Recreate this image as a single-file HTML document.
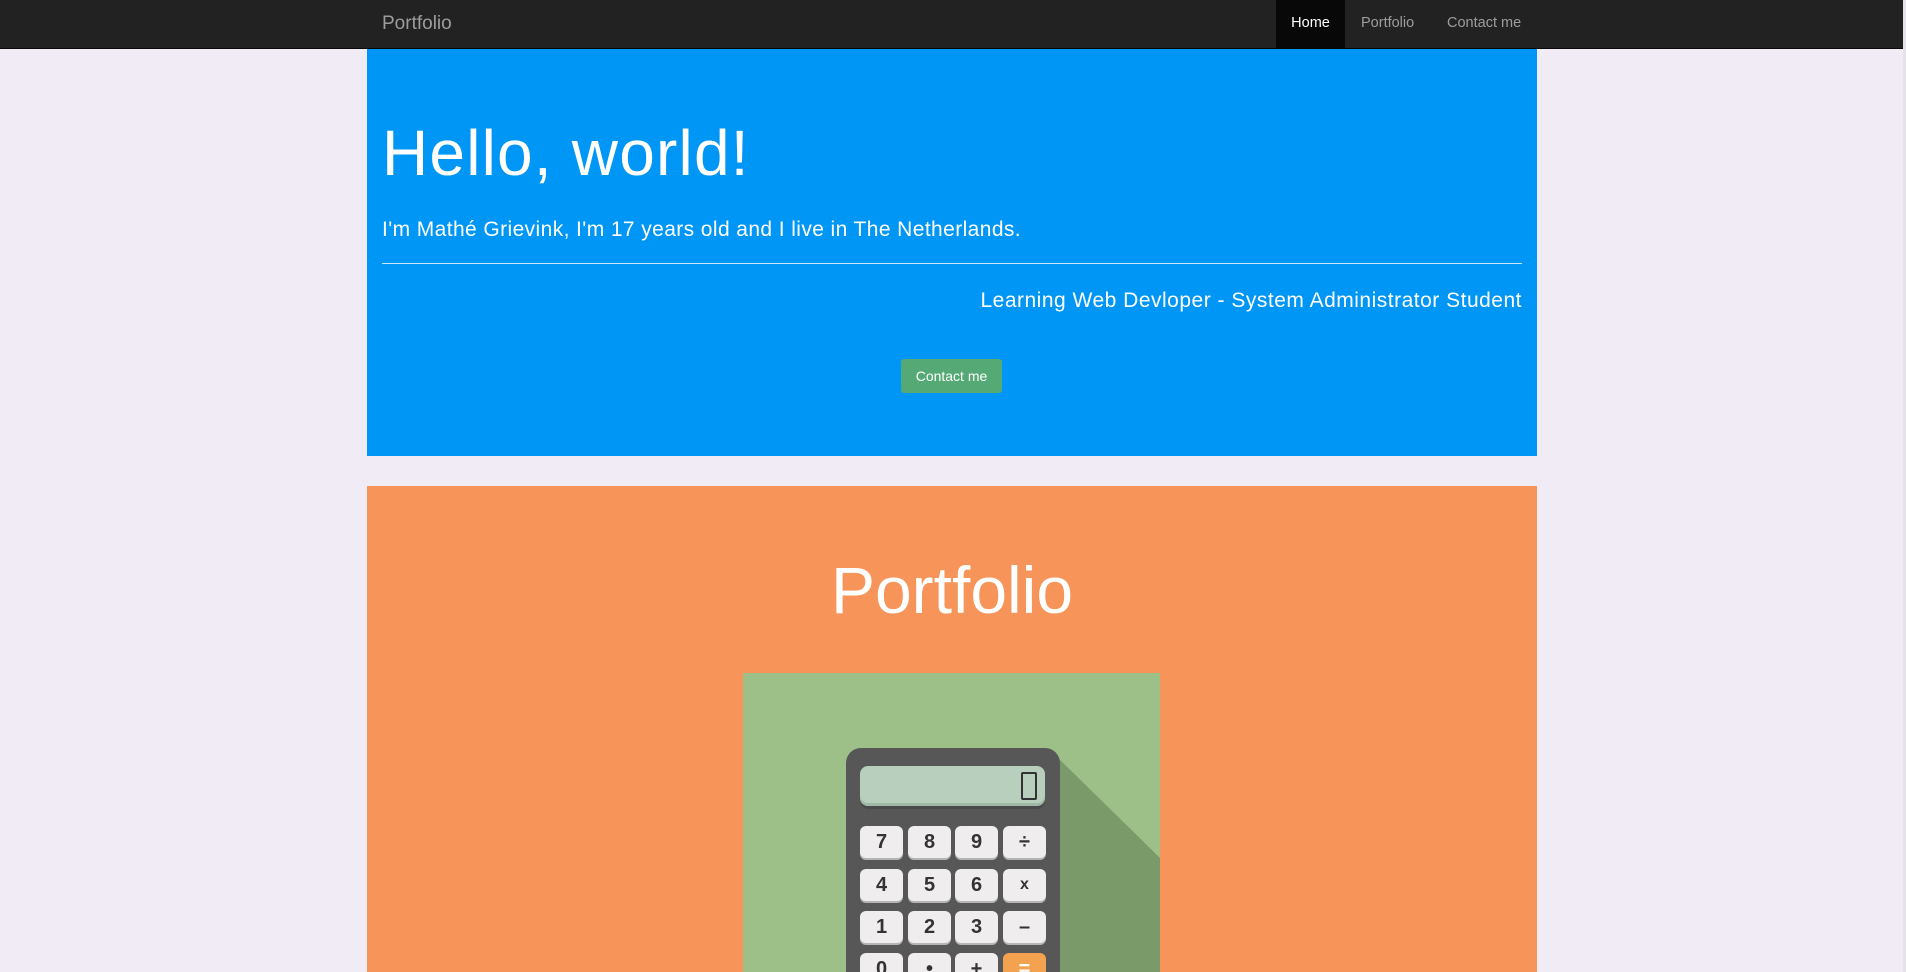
<!DOCTYPE html>
<html><head><meta charset="utf-8"><style>
*{box-sizing:border-box;margin:0;padding:0}
body{width:1906px;height:972px;overflow:hidden;background:#f0ebf4;font-family:"Liberation Sans",sans-serif;position:relative}
.nav{position:absolute;left:0;top:0;width:1903px;height:49px;background:#222;border-bottom:1px solid #080808}
.brand{position:absolute;left:382px;top:13px;font-size:19px;color:#9d9d9d}
.ni{position:absolute;top:0;height:48px;line-height:46px;font-size:14.5px;color:#9d9d9d}
.jumbo{position:absolute;left:367px;top:49px;width:1170px;height:407px;background:#0096f6;color:#fff}
.jumbo h1{position:absolute;left:15px;top:67px;font-size:64px;font-weight:normal;letter-spacing:1.2px}
.p1{position:absolute;left:15px;top:169px;font-size:21px;letter-spacing:0.4px}
.hr{position:absolute;left:15px;right:15px;top:214px;border-top:1px solid #cfe6f6}
.p2{position:absolute;right:15px;top:240px;font-size:21px;letter-spacing:0.5px}
.btn{position:absolute;left:534px;top:310px;width:101px;height:34px;background:#55a974;border-radius:3px;font-size:14px;line-height:34px;text-align:center}
.port{position:absolute;left:367px;top:486px;width:1170px;height:486px;background:#f69459;color:#fff}
.port h1{position:absolute;left:0;width:100%;text-align:center;top:66px;font-size:66px;font-weight:normal}
.img{position:absolute;left:743px;top:673px;width:417px;height:299px;background:#9cc087;overflow:hidden}
.key{position:absolute;width:43px;height:32px;background:#efeded;border-radius:6px;box-shadow:0 2px 0 #b5b5b5;color:#333;font-weight:bold;font-size:20px;text-align:center;line-height:32px}
</style></head><body>
<div class="nav"><div class="brand">Portfolio</div>
<div class="ni" style="left:1276px;width:69px;background:#080808;color:#fff;text-align:center">Home</div>
<div class="ni" style="left:1361px">Portfolio</div>
<div class="ni" style="left:1447px">Contact me</div></div>
<div class="jumbo"><h1>Hello, world!</h1>
<div class="p1">I'm Mathé Grievink, I'm 17 years old and I live in The Netherlands.</div>
<div class="hr"></div>
<div class="p2">Learning Web Devloper - System Administrator Student</div>
<div class="btn">Contact me</div></div>
<div class="port"><h1>Portfolio</h1></div>
<div class="img">
<svg width="417" height="299" style="position:absolute;left:0;top:0"><polygon points="300,80 310,80 417,185 417,299 300,299" fill="#7a9a6a"/></svg>
<div style="position:absolute;left:103px;top:75px;width:214px;height:260px;background:#575757;border-radius:15px"></div>
<div style="position:absolute;left:117px;top:93px;width:185px;height:40px;background:#b8cfbd;border-radius:8px;box-shadow:0 3px 0 #4a4a4a, inset 0 -3px 0 #9fb8a5"></div>
<div style="position:absolute;left:278px;top:99px;width:16px;height:28px;border:2px solid #333;border-radius:2px"></div>
<div class="key" style="left:117px;top:153px">7</div><div class="key" style="left:165px;top:153px">8</div><div class="key" style="left:212px;top:153px">9</div><div class="key" style="left:260px;top:153px">÷</div>
<div class="key" style="left:117px;top:196px">4</div><div class="key" style="left:165px;top:196px">5</div><div class="key" style="left:212px;top:196px">6</div><div class="key" style="left:260px;top:196px;font-size:16px">x</div>
<div class="key" style="left:117px;top:238px">1</div><div class="key" style="left:165px;top:238px">2</div><div class="key" style="left:212px;top:238px">3</div><div class="key" style="left:260px;top:238px">–</div>
<div class="key" style="left:117px;top:280px">0</div><div class="key" style="left:165px;top:280px">•</div><div class="key" style="left:212px;top:280px">+</div><div class="key" style="left:260px;top:280px;background:#f4a24f;color:#fff">=</div>
</div>
<div style="position:absolute;left:1903px;top:0;width:3px;height:972px;background:#e6e2ea"></div>
</body></html>
